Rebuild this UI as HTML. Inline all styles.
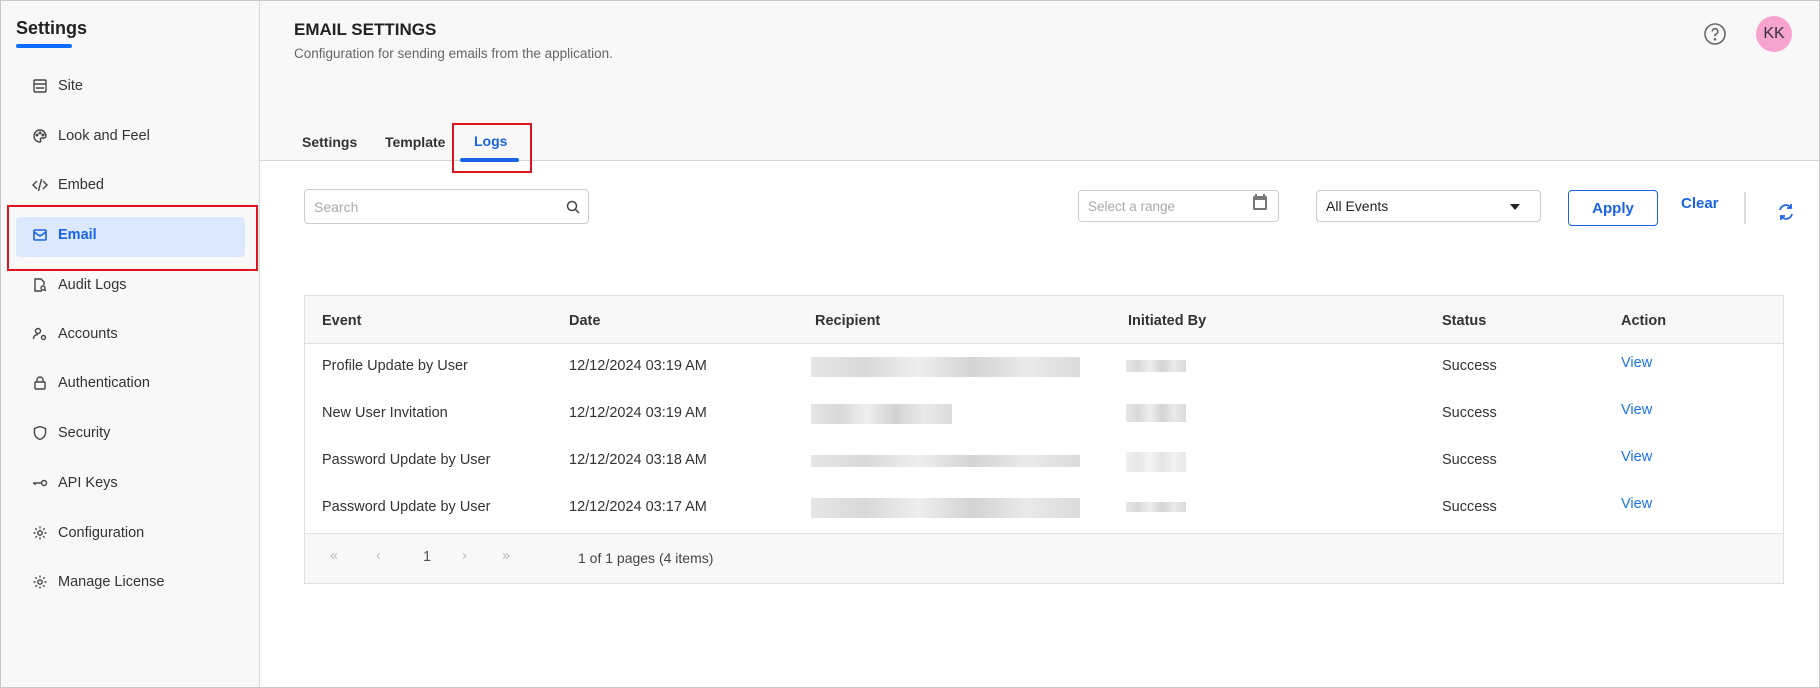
<!DOCTYPE html>
<html><head><meta charset="utf-8"><style>
*{box-sizing:border-box;margin:0;padding:0}
body{width:1820px;height:688px;overflow:hidden;font-family:"Liberation Sans",sans-serif;background:#fff;color:#222;position:relative}
.frame{position:absolute;inset:0;border:1px solid #c8c8c8;z-index:5;pointer-events:none}
.side{position:absolute;left:0;top:0;width:260px;height:688px;background:#f8f8f8;border-right:1px solid #d8d8d8}
.side h1{position:absolute;left:16px;top:18px;font-size:18px;font-weight:bold;color:#222}
.side .ul{position:absolute;left:16px;top:44px;width:56px;height:4px;border-radius:2px;background:#0d6efd}
.nav{position:absolute;left:32px;font-size:14.5px;color:#333;display:flex;align-items:center;gap:10px}
.nav svg{width:16px;height:16px}
.hl{position:absolute;left:16px;top:217px;width:229px;height:40px;background:#dbe8fd;border-radius:4px}
.red{position:absolute;border:2px solid #e0141e}
.head{position:absolute;left:260px;top:0;right:0;height:161px;background:#f8f8f8;border-bottom:1px solid #d4d4d4}
.abs{position:absolute}
.inp{position:absolute;border:1px solid #ccc;border-radius:4px;background:#fff;font-size:14px;color:#aaa;display:flex;align-items:center;padding-left:9px}
.th,.td{position:absolute;font-size:14.5px;color:#333}
.th{font-weight:bold;color:#333}
.blur{position:absolute;height:20px;background:linear-gradient(90deg,#e0e0e0,#cfcfcf 20%,#eaeaea 40%,#c8c8c8 60%,#e4e4e4 80%,#d2d2d2);opacity:.8}
.view{position:absolute;left:1621px;font-size:14.5px;color:#1a73e8}
</style></head><body>
<div class="side">
<h1>Settings</h1><div class="ul"></div>
<div class="hl"></div>
<div class="nav" style="top:78px"><svg viewBox="0 0 16 16" fill="none" stroke="#444" stroke-width="1.4"><rect x="2" y="2" width="12" height="12" rx="1"/><path d="M2 6h12M4 10h8"/></svg>Site</div>
<div class="nav" style="top:128px"><svg viewBox="0 0 16 16" fill="none" stroke="#444" stroke-width="1.4"><path d="M8 2a6 6 0 1 0 0 12c1 0 1-1 .5-2s0-2 1.5-2h2a2 2 0 0 0 2-2c0-3-3-6-6-6z"/><circle cx="5" cy="7" r=".8"/><circle cx="8" cy="5" r=".8"/><circle cx="11" cy="7" r=".8"/></svg>Look and Feel</div>
<div class="nav" style="top:177px"><svg viewBox="0 0 16 16" fill="none" stroke="#444" stroke-width="1.4"><path d="M5 4L1 8l4 4M11 4l4 4-4 4M9.5 2l-3 12"/></svg>Embed</div>
<div class="nav" style="top:227px;color:#1a63e8;font-weight:bold"><svg viewBox="0 0 16 16" fill="none" stroke="#1a63e8" stroke-width="1.6"><rect x="2" y="3" width="12" height="10" rx="1"/><path d="M2 5l6 4 6-4"/></svg>Email</div>
<div class="nav" style="top:277px"><svg viewBox="0 0 16 16" fill="none" stroke="#444" stroke-width="1.4"><path d="M10 14H3V2h6l3 3v3"/><circle cx="11" cy="11" r="2"/><path d="M12.5 12.5L14 14"/></svg>Audit Logs</div>
<div class="nav" style="top:326px"><svg viewBox="0 0 16 16" fill="none" stroke="#444" stroke-width="1.4"><circle cx="6" cy="5" r="2.5"/><path d="M1.5 13c0-3 2-4.5 4.5-4.5"/><circle cx="11.5" cy="11.5" r="2"/></svg>Accounts</div>
<div class="nav" style="top:375px"><svg viewBox="0 0 16 16" fill="none" stroke="#444" stroke-width="1.4"><rect x="3" y="7" width="10" height="7" rx="1"/><path d="M5 7V5a3 3 0 0 1 6 0v2"/></svg>Authentication</div>
<div class="nav" style="top:425px"><svg viewBox="0 0 16 16" fill="none" stroke="#444" stroke-width="1.4"><path d="M8 1.5l5.5 2v4.5c0 3-2.5 5.5-5.5 6.5-3-1-5.5-3.5-5.5-6.5V3.5z"/></svg>Security</div>
<div class="nav" style="top:475px"><svg viewBox="0 0 16 16" fill="none" stroke="#444" stroke-width="1.4"><circle cx="12" cy="8" r="2.5"/><path d="M9.5 8H1M3 8v2"/></svg>API Keys</div>
<div class="nav" style="top:525px"><svg viewBox="0 0 16 16" fill="none" stroke="#444" stroke-width="1.4"><circle cx="8" cy="8" r="2.2"/><path d="M8 1.5v2M8 12.5v2M1.5 8h2M12.5 8h2M3.4 3.4l1.4 1.4M11.2 11.2l1.4 1.4M3.4 12.6l1.4-1.4M11.2 4.8l1.4-1.4"/></svg>Configuration</div>
<div class="nav" style="top:574px"><svg viewBox="0 0 16 16" fill="none" stroke="#444" stroke-width="1.4"><circle cx="8" cy="8" r="2.2"/><path d="M8 1.5v2M8 12.5v2M1.5 8h2M12.5 8h2M3.4 3.4l1.4 1.4M11.2 11.2l1.4 1.4M3.4 12.6l1.4-1.4M11.2 4.8l1.4-1.4"/></svg>Manage License</div>
</div>
<div class="red" style="left:7px;top:205px;width:251px;height:66px"></div>

<div class="head"></div>
<div class="abs" style="left:294px;top:20px;font-size:17px;font-weight:bold;color:#222">EMAIL SETTINGS</div>
<div class="abs" style="left:294px;top:46px;font-size:13.5px;color:#666">Configuration for sending emails from the application.</div>
<svg class="abs" style="left:1703px;top:22px" width="24" height="24" viewBox="0 0 24 24" fill="none" stroke="#666" stroke-width="1.6"><circle cx="12" cy="12" r="10"/><path d="M9.2 9.5a2.8 2.8 0 1 1 3.8 2.6c-.7.3-1 .8-1 1.5v.6"/><circle cx="12" cy="17.3" r=".5" fill="#666"/></svg>
<div class="abs" style="left:1756px;top:16px;width:36px;height:36px;border-radius:50%;background:#f7a3cf;font-size:16px;color:#333;display:flex;align-items:center;justify-content:center">KK</div>
<div class="abs" style="left:302px;top:134px;font-size:14px;font-weight:bold;color:#333">Settings</div>
<div class="abs" style="left:385px;top:134px;font-size:14px;font-weight:bold;color:#333">Template</div>
<div class="abs" style="left:474px;top:133px;font-size:14px;font-weight:bold;color:#1a63e8">Logs</div>
<div class="abs" style="left:460px;top:158px;width:59px;height:4px;border-radius:2px;background:#1a63e8"></div>
<div class="red" style="left:452px;top:123px;width:80px;height:50px"></div>

<div class="inp" style="left:304px;top:189px;width:285px;height:35px">Search
<svg class="abs" style="right:7px;top:9px" width="16" height="16" viewBox="0 0 16 16" fill="none" stroke="#444" stroke-width="1.5"><circle cx="7" cy="7" r="4.5"/><path d="M10.5 10.5L14 14"/></svg></div>
<div class="inp" style="left:1078px;top:190px;width:201px;height:32px;font-size:13.5px">Select a range
<svg class="abs" style="right:10px;top:2px" width="16" height="18" viewBox="0 0 16 18"><rect x="1" y="3" width="14" height="14" rx="1.5" fill="#777"/><rect x="3" y="7" width="10" height="8" fill="#fff"/><rect x="3" y="1" width="2" height="4" fill="#777"/><rect x="11" y="1" width="2" height="4" fill="#777"/></svg></div>
<div class="inp" style="left:1316px;top:190px;width:225px;height:32px;color:#222;font-size:14px">All Events
<div class="abs" style="right:20px;top:13px;border:5px solid transparent;border-top:6px solid #222;border-bottom:0"></div></div>
<div class="abs" style="left:1568px;top:190px;width:90px;height:36px;border:1px solid #1a63e8;border-radius:4px;display:flex;align-items:center;justify-content:center;font-size:15px;font-weight:bold;color:#1a63e8">Apply</div>
<div class="abs" style="left:1681px;top:195px;font-size:15px;font-weight:bold;color:#1a63e8">Clear</div>
<div class="abs" style="left:1744px;top:192px;width:2px;height:32px;background:#ddd"></div>
<svg class="abs" style="left:1776px;top:202px" width="20" height="20" viewBox="0 0 20 20" fill="none" stroke="#1a63e8" stroke-width="1.8"><path d="M4 8a6 6 0 0 1 11-2M16 12a6 6 0 0 1-11 2"/><path d="M15 2v4h-4M5 18v-4h4"/></svg>

<div class="abs" style="left:304px;top:295px;width:1480px;height:289px;border:1px solid #e0e0e0"></div>
<div class="abs" style="left:305px;top:296px;width:1478px;height:48px;background:#f8f8f8;border-bottom:1px solid #e0e0e0"></div>
<div class="abs" style="left:305px;top:533px;width:1478px;height:50px;background:#f8f8f8;border-top:1px solid #e0e0e0"></div>
<div class="th" style="left:322px;top:313px">Event</div>
<div class="th" style="left:569px;top:313px">Date</div>
<div class="th" style="left:815px;top:313px">Recipient</div>
<div class="th" style="left:1128px;top:313px">Initiated By</div>
<div class="th" style="left:1442px;top:313px">Status</div>
<div class="th" style="left:1621px;top:313px">Action</div>

<div class="td" style="left:322px;top:358px">Profile Update by User</div>
<div class="td" style="left:569px;top:358px">12/12/2024 03:19 AM</div>
<div class="blur" style="left:811px;top:357px;width:269px"></div>
<div class="blur" style="left:1126px;top:360px;width:60px;height:12px"></div>
<div class="td" style="left:1442px;top:358px">Success</div>
<div class="view" style="top:355px">View</div>

<div class="td" style="left:322px;top:405px">New User Invitation</div>
<div class="td" style="left:569px;top:405px">12/12/2024 03:19 AM</div>
<div class="blur" style="left:811px;top:404px;width:141px"></div>
<div class="blur" style="left:1126px;top:404px;width:60px;height:18px"></div>
<div class="td" style="left:1442px;top:405px">Success</div>
<div class="view" style="top:402px">View</div>

<div class="td" style="left:322px;top:452px">Password Update by User</div>
<div class="td" style="left:569px;top:452px">12/12/2024 03:18 AM</div>
<div class="blur" style="left:811px;top:455px;width:269px;height:12px"></div>
<div class="blur" style="left:1126px;top:452px;width:60px;height:20px;opacity:.5"></div>
<div class="td" style="left:1442px;top:452px">Success</div>
<div class="view" style="top:449px">View</div>

<div class="td" style="left:322px;top:499px">Password Update by User</div>
<div class="td" style="left:569px;top:499px">12/12/2024 03:17 AM</div>
<div class="blur" style="left:811px;top:498px;width:269px"></div>
<div class="blur" style="left:1126px;top:502px;width:60px;height:10px"></div>
<div class="td" style="left:1442px;top:499px">Success</div>
<div class="view" style="top:496px">View</div>

<div class="td" style="left:330px;top:548px;color:#bbb">«</div>
<div class="td" style="left:376px;top:548px;color:#bbb">‹</div>
<div class="td" style="left:423px;top:549px;color:#555">1</div>
<div class="td" style="left:462px;top:548px;color:#bbb">›</div>
<div class="td" style="left:502px;top:548px;color:#bbb">»</div>
<div class="td" style="left:578px;top:550px;font-size:14px;color:#444">1 of 1 pages (4 items)</div>
<div class="frame"></div>
</body></html>
